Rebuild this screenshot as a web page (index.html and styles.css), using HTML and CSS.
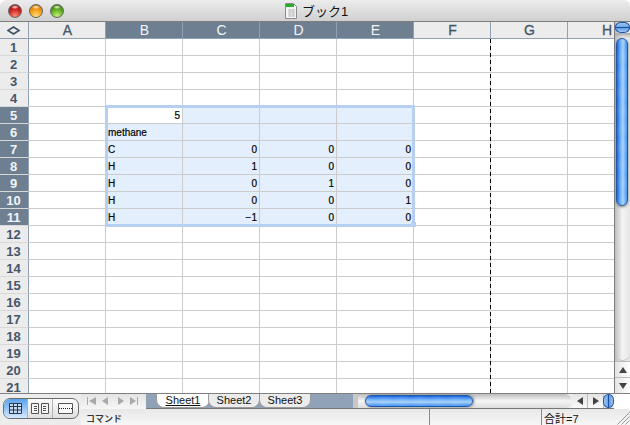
FILE: index.html
```html
<!DOCTYPE html>
<html lang="ja">
<head>
    <meta charset="UTF-8">
    <title>ブック1</title>
    <link rel="stylesheet" href="styles.css">
</head>
<body>
    <div class="window">
        <div class="titlebar">
            <div class="lights">
                <span class="light red"></span>
                <span class="light yellow"></span>
                <span class="light green"></span>
            </div>
            <div class="doc-title">
                <svg class="doc-icon" width="12" height="16" viewBox="0 0 12 16">
                    <path d="M.5.5h8l3 3v12H.5z" fill="#f4f4f4" stroke="#8a8a8a"/>
                    <path d="M1 1h8v3H1z" fill="#22b02a"/>
                    <path d="M3 7h7M3 9h7M3 11h7M3 13h7M5 6v8M8 6v8" stroke="#c4c4c4" fill="none"/>
                </svg>
                <span>ブック1</span>
            </div>
        </div>

        <div class="sheet-area">
            <div class="grid-wrap">
                <table class="grid">
                    <tr class="head">
                        <th class="corner"><svg width="15" height="9" viewBox="0 0 15 9"><path d="M7.5 1 13 4.5 7.5 8 2 4.5z" fill="none" stroke="#3f5266" stroke-width="1.6"/></svg></th>
                        <th>A</th><th class="on">B</th><th class="on">C</th><th class="on">D</th><th class="on">E</th><th>F</th><th>G</th><th class="last">H</th>
                    </tr>
                    <tr><th>1</th><td></td><td></td><td></td><td></td><td></td><td></td><td></td><td></td></tr>
                    <tr><th>2</th><td></td><td></td><td></td><td></td><td></td><td></td><td></td><td></td></tr>
                    <tr><th>3</th><td></td><td></td><td></td><td></td><td></td><td></td><td></td><td></td></tr>
                    <tr><th>4</th><td></td><td></td><td></td><td></td><td></td><td></td><td></td><td></td></tr>
                    <tr><th class="on">5</th><td></td><td class="num">5</td><td class="sel"></td><td class="sel"></td><td class="sel"></td><td></td><td></td><td></td></tr>
                    <tr><th class="on">6</th><td></td><td class="sel">methane</td><td class="sel"></td><td class="sel"></td><td class="sel"></td><td></td><td></td><td></td></tr>
                    <tr><th class="on">7</th><td></td><td class="sel">C</td><td class="sel num">0</td><td class="sel num">0</td><td class="sel num">0</td><td></td><td></td><td></td></tr>
                    <tr><th class="on">8</th><td></td><td class="sel">H</td><td class="sel num">1</td><td class="sel num">0</td><td class="sel num">0</td><td></td><td></td><td></td></tr>
                    <tr><th class="on">9</th><td></td><td class="sel">H</td><td class="sel num">0</td><td class="sel num">1</td><td class="sel num">0</td><td></td><td></td><td></td></tr>
                    <tr><th class="on">10</th><td></td><td class="sel">H</td><td class="sel num">0</td><td class="sel num">0</td><td class="sel num">1</td><td></td><td></td><td></td></tr>
                    <tr><th class="on">11</th><td></td><td class="sel">H</td><td class="sel num">−1</td><td class="sel num">0</td><td class="sel num">0</td><td></td><td></td><td></td></tr>
                    <tr><th>12</th><td></td><td></td><td></td><td></td><td></td><td></td><td></td><td></td></tr>
                    <tr><th>13</th><td></td><td></td><td></td><td></td><td></td><td></td><td></td><td></td></tr>
                    <tr><th>14</th><td></td><td></td><td></td><td></td><td></td><td></td><td></td><td></td></tr>
                    <tr><th>15</th><td></td><td></td><td></td><td></td><td></td><td></td><td></td><td></td></tr>
                    <tr><th>16</th><td></td><td></td><td></td><td></td><td></td><td></td><td></td><td></td></tr>
                    <tr><th>17</th><td></td><td></td><td></td><td></td><td></td><td></td><td></td><td></td></tr>
                    <tr><th>18</th><td></td><td></td><td></td><td></td><td></td><td></td><td></td><td></td></tr>
                    <tr><th>19</th><td></td><td></td><td></td><td></td><td></td><td></td><td></td><td></td></tr>
                    <tr><th>20</th><td></td><td></td><td></td><td></td><td></td><td></td><td></td><td></td></tr>
                    <tr><th>21</th><td></td><td></td><td></td><td></td><td></td><td></td><td></td><td></td></tr>
                </table>
                <div class="selection"><span class="handle"></span></div>
                <div class="page-break"></div>
            </div>
            <div class="vscroll">
                <div class="split-v"></div>
                <div class="track-v"><div class="thumb-v"></div></div>
                <div class="arrows-v">
                    <span class="arrow-btn"><i class="tri up"></i></span>
                    <span class="arrow-btn"><i class="tri down"></i></span>
                </div>
            </div>
        </div>

        <div class="bottom">
            <div class="views">
                <div class="view-group">
                    <span class="view active">
                        <svg width="13" height="11" viewBox="0 0 13 11"><path d="M.5.5h12v10H.5zM.5 3.5h12M.5 7h12M4.5.5v10M8.5.5v10" fill="#c9dcf3" stroke="#24384f"/></svg>
                    </span>
                    <span class="view">
                        <svg width="18" height="11" viewBox="0 0 18 11"><path d="M.5.5h7v10h-7zM10.5.5h7v10h-7z" fill="#f6f6f6" stroke="#555"/><path d="M3 3.5h3M3 5.5h3M3 7.5h3M12 3.5h3M12 5.5h3M12 7.5h3" fill="none" stroke="#555"/></svg>
                    </span>
                    <span class="view">
                        <svg width="15" height="11" viewBox="0 0 15 11"><path d="M.5.5h14v10H.5z" fill="#fafafa" stroke="#555"/><path d="M1 5.5h13" stroke="#222" stroke-dasharray="1 1"/></svg>
                    </span>
                </div>
            </div>
            <div class="bottom-main">
                <div class="tabbar">
                    <div class="tab-nav">
                        <svg width="65" height="14" viewBox="0 0 65 14">
                            <path d="M6 3h1v8H6zM15 3v8l-7-4zM27 3v8l-6-4zM37 3v8l6-4zM49 3v8l6-4zM56 3h1v8h-1z" fill="#a9a9a9"/>
                        </svg>
                    </div>
                    <div class="tabs">
                        <span class="tab current">Sheet1</span>
                        <span class="tab">Sheet2</span>
                        <span class="tab">Sheet3</span>
                    </div>
                    <div class="hscroll">
                        <div class="track-h"><div class="thumb-h"></div></div>
                        <span class="arrow-btn-h"><i class="tri left"></i></span>
                        <span class="arrow-btn-h"><i class="tri right"></i></span>
                        <div class="split-h"></div>
                    </div>
                    <div class="corner-gap"></div>
                </div>
                <div class="statusbar">
                    <span class="st-cmd">コマンド</span>
                    <span class="st-a"></span>
                    <span class="st-sum">合計=7</span>
                    <svg class="grip" width="15" height="15" viewBox="0 0 15 15">
                        <path d="M14.5 2.5 2.5 14.5M14.5 6.5l-8 8M14.5 10.5l-4 4" fill="none" stroke="#999"/>
                    </svg>
                </div>
            </div>
        </div>
    </div>
</body>
</html>
```

FILE: styles.css
```css
* {
    box-sizing: border-box;
}
html, body {
    margin: 0;
    padding: 0;
    background: #fff;
}
body {
    width: 630px;
    height: 425px;
    overflow: hidden;
    font-family: "Liberation Sans", "Noto Sans CJK JP", sans-serif;
}
.window {
    width: 630px;
    height: 425px;
    display: flex;
    flex-direction: column;
    background: #fff;
    overflow: hidden;
}

/* title bar */
.titlebar {
    height: 22px;
    flex: none;
    position: relative;
    display: flex;
    justify-content: center;
    align-items: center;
    background: linear-gradient(#ececec, #d0d0d0);
    border-bottom: 1px solid #7d7d7d;
    border-radius: 6px 6px 0 0;
}
.lights {
    position: absolute;
    left: 8px;
    top: 4px;
    display: flex;
    gap: 7px;
}
.light {
    width: 14px;
    height: 14px;
    border-radius: 50%;
    border: 1px solid #666;
}
.red {
    background: radial-gradient(ellipse 4px 2px at 50% 18%, #ffe8e4, transparent),
        radial-gradient(circle at 50% 90%, #ff8c7c, #c8201c 55%, #8a1212);
}
.yellow {
    background: radial-gradient(ellipse 4px 2px at 50% 18%, #fff4dc, transparent),
        radial-gradient(circle at 50% 90%, #ffdc78, #f0960e 55%, #b06a08);
}
.green {
    background: radial-gradient(ellipse 4px 2px at 50% 18%, #eefcdc, transparent),
        radial-gradient(circle at 50% 90%, #c4f07c, #5aaa1e 55%, #2c6a10);
}
.doc-title {
    display: flex;
    align-items: center;
    gap: 5px;
    font-size: 13px;
    color: #111;
    margin-left: 3px;
}

/* sheet */
.sheet-area {
    height: 371px;
    flex: none;
    display: flex;
}
.grid-wrap {
    width: 614px;
    position: relative;
    overflow: hidden;
}
.grid {
    border-collapse: separate;
    border-spacing: 0;
    table-layout: fixed;
    width: 644px;
    font-size: 10px;
}
.grid th, .grid td {
    height: 17px;
    padding: 0;
    overflow: hidden;
    white-space: nowrap;
}
.grid th {
    width: 29px;
    background: #ececec;
    color: #44566a;
    font-size: 13px;
    font-weight: bold;
    text-align: center;
    border-right: 1px solid #8fa2b5;
    border-bottom: 1px solid #d8d8d8;
    padding-right: 1px;
}
.grid .head th {
    width: 77px;
    font-size: 14px;
    font-weight: normal;
    -webkit-text-stroke: 0.3px #44566a;
    border-right: 1px solid #8fa2b5;
    border-bottom: 1px solid #8fa2b5;
    padding-left: 2px;
}
.grid .head th.corner {
    width: 29px;
    padding-left: 0;
}
.grid .head th.last {
    text-align: left;
    padding-left: 34px;
}
.grid th.on, .grid .head th.on {
    background: #6d7f91;
    color: #f2f5f8;
    -webkit-text-stroke: 0;
}
.grid td {
    width: 77px;
    border-right: 1px solid #cccccc;
    border-bottom: 1px solid #cccccc;
    color: #000;
    padding: 0 2px 0 2px;
    -webkit-text-stroke: 0.2px #000;
}
.grid td.sel {
    background: #e4effe;
}
.grid td.num {
    text-align: right;
}
.selection {
    position: absolute;
    left: 105px;
    top: 83px;
    width: 310px;
    height: 122px;
    border: 3px solid #b7d0f2;
    pointer-events: none;
}
.handle {
    position: absolute;
    right: -4px;
    bottom: -3px;
    width: 5px;
    height: 5px;
    background: #b7d0f2;
}
.page-break {
    position: absolute;
    left: 490px;
    top: 17px;
    bottom: 0;
    width: 1px;
    background: repeating-linear-gradient(#000 0, #000 4px, transparent 4px, transparent 7px);
}

/* right scrollbar */
.vscroll {
    width: 16px;
    flex: none;
    display: flex;
    flex-direction: column;
    background: linear-gradient(90deg, #bdbdbd, #f0f0f0 45%, #e2e2e2);
    border-left: 1px solid #7d7d7d;
}
.split-v {
    height: 11px;
    flex: none;
    background: linear-gradient(#a4c8f0 0, #6aa6ea 44%, #1a4f9e 44%, #1a4f9e 56%, #5c9ce6 56%, #a4c8f0 100%);
    border: 1px solid #1e56a8;
    border-radius: 6px / 5px;
}
.track-v {
    flex: 1;
    padding: 5px 2px 0 1px;
    background: linear-gradient(#a8a8a8, transparent 5px), linear-gradient(90deg, #bdbdbd, #f4f4f4 50%, #e6e6e6);
    border-radius: 0 0 8px 8px;
    border-bottom: 1px solid #c4c4c4;
}
.thumb-v {
    height: 168px;
    border-radius: 6px;
    border: 1px solid #1e56a8;
    box-shadow: 0 1px 3px #777;
    background: repeating-linear-gradient(rgba(255, 255, 255, 0.07) 0, transparent 9px, rgba(255, 255, 255, 0.07) 18px),
        linear-gradient(90deg, #1a62e0, #6db0f6 35%, #a8d2fa 60%, #3f90f0);
}
.arrows-v {
    display: flex;
    flex-direction: column;
}
.arrow-btn {
    height: 16px;
    display: flex;
    align-items: center;
    justify-content: center;
    background: linear-gradient(90deg, #e4e4e4, #fff);
    border-top: 1px solid #bbb;
}
.tri {
    display: block;
    width: 0;
    height: 0;
    border-style: solid;
}
.tri.up { border-width: 0 4px 6px; border-color: transparent transparent #444; }
.tri.down { border-width: 6px 4px 0; border-color: #444 transparent transparent; }
.tri.left { border-width: 4px 6px 4px 0; border-color: transparent #444 transparent transparent; }
.tri.right { border-width: 4px 0 4px 6px; border-color: transparent transparent transparent #444; }

/* bottom */
.bottom {
    height: 32px;
    flex: none;
    display: flex;
    background: #ececec;
    border-top: 1px solid #808080;
}
.views {
    width: 81px;
    flex: none;
    padding: 4px 0 0 3px;
    background: #ececec;
}
.view-group {
    width: 76px;
    height: 21px;
    display: flex;
    border: 1px solid #6c6c6c;
    border-radius: 7px;
    background: linear-gradient(#fdfdfd, #e0e0e0);
    overflow: hidden;
}
.view {
    width: 25px;
    display: flex;
    align-items: center;
    justify-content: center;
    border-right: 1px solid #b4b4b4;
}
.view:last-child {
    border-right: 0;
    flex: 1;
}
.view.active {
    width: 24px;
    background: linear-gradient(#5aa2ee, #d4e8fc);
}
.bottom-main {
    flex: 1;
    display: flex;
    flex-direction: column;
}
.tabbar {
    height: 15px;
    flex: none;
    display: flex;
}
.tab-nav {
    width: 65px;
    flex: none;
    background: linear-gradient(#e4e4e4, #f6f6f6);
}
.tab-nav svg {
    display: block;
}
.tabs {
    display: flex;
    padding-left: 10px;
    width: 207px;
    flex: none;
    background: #8fa2b8;
    border-bottom: 1px solid #777;
}
.tab {
    width: 52px;
    height: 14px;
    margin-right: -1px;
    background: #ececec;
    border-radius: 0 0 8px 8px;
    border: 1px solid #9a9a9a;
    border-top: 0;
    font-size: 11px;
    line-height: 13px;
    text-align: center;
    color: #111;
}
.tab.current {
    background: #fff;
    text-decoration: underline;
    width: 54px;
    margin-right: -2px;
}
.hscroll {
    flex: 1;
    display: flex;
    align-items: stretch;
    background: #f0f0f0;
    border-bottom: 1px solid #777;
}
.track-h {
    flex: 1;
    padding: 1px 0 0 7px;
    margin-left: 5px;
    background: linear-gradient(#bdbdbd, #f6f6f6 50%, #dcdcdc);
    border-radius: 0 8px 8px 0;
    box-shadow: -5px 0 0 #c8c8c8;
}
.thumb-h {
    width: 108px;
    height: 12px;
    border-radius: 6px;
    border: 1px solid #1e56a8;
    box-shadow: 1px 0 3px #777;
    background: repeating-linear-gradient(90deg, rgba(255, 255, 255, 0.07) 0, transparent 9px, rgba(255, 255, 255, 0.07) 18px),
        linear-gradient(#1a62e0, #6db0f6 35%, #a8d2fa 60%, #3f90f0);
}
.arrow-btn-h {
    width: 16px;
    flex: none;
    display: flex;
    align-items: center;
    justify-content: center;
    background: linear-gradient(#e4e4e4, #fafafa);
    border-right: 1px solid #bbb;
}
.split-h {
    width: 11px;
    flex: none;
    background: linear-gradient(90deg, #a4c8f0 0, #6aa6ea 44%, #1a4f9e 44%, #1a4f9e 56%, #5c9ce6 56%, #a4c8f0 100%);
    border: 1px solid #1e56a8;
    border-radius: 5px / 6px;
    margin-left: -1px;
}
.corner-gap {
    width: 16px;
    flex: none;
    background: #fff;
}
.statusbar {
    flex: 1;
    display: flex;
    font-size: 10px;
    line-height: 20px;
    color: #111;
    background: linear-gradient(#e8e8e8, #fafafa);
}
.st-cmd {
    width: 349px;
    padding-left: 5px;
    font-size: 9px;
    -webkit-text-stroke: 0.2px #111;
    border-right: 1px solid #8a8a8a;
}
.st-a {
    width: 112px;
    border-right: 1px solid #8a8a8a;
}
.st-sum {
    flex: 1;
    padding-left: 2px;
    font-size: 11px;
}
.grip {
    flex: none;
    margin-top: 1px;
}
```
